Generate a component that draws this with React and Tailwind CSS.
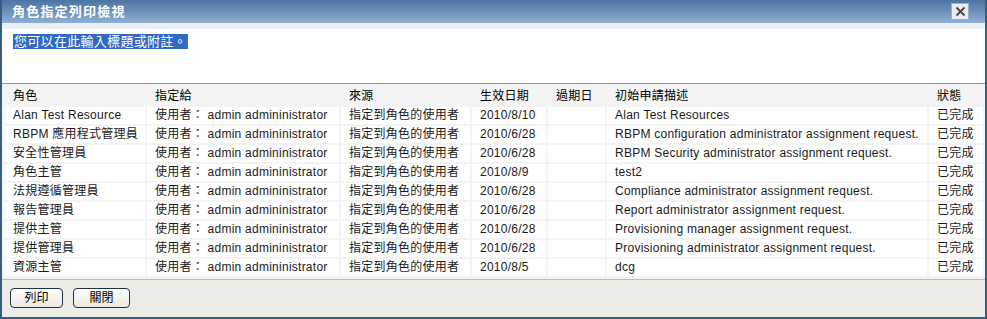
import React from 'react';

const rows = [
  ['Alan Test Resource', '2010/8/10', 'Alan Test Resources'],
  ['RBPM 應用程式管理員', '2010/6/28', 'RBPM configuration administrator assignment request.'],
  ['安全性管理員', '2010/6/28', 'RBPM Security administrator assignment request.'],
  ['角色主管', '2010/8/9', 'test2'],
  ['法規遵循管理員', '2010/6/28', 'Compliance administrator assignment request.'],
  ['報告管理員', '2010/6/28', 'Report administrator assignment request.'],
  ['提供主管', '2010/6/28', 'Provisioning manager assignment request.'],
  ['提供管理員', '2010/6/28', 'Provisioning administrator assignment request.'],
  ['資源主管', '2010/8/5', 'dcg'],
];

const headers = ['角色', '指定給', '來源', '生效日期', '過期日', '初始申請描述', '狀態'];

const font = { fontFamily: '"Liberation Sans", "Noto Sans CJK TC", sans-serif' };

const Cell = ({ children }) => (
  <div className="h-[17px] bg-white pl-[8px] text-[12px] leading-[17px] tracking-[0.25px] text-[#1a1a1a] whitespace-nowrap overflow-hidden">
    {children}
  </div>
);

const Button = ({ label, width }) => (
  <button
    className={`${width} h-[20px] rounded-[4px] border border-[#1c3350] bg-gradient-to-b from-white to-[#ebe8df] text-[12px] leading-[18px] text-black`}
  >
    {label}
  </button>
);

export default function App() {
  return (
    <div className="w-[987px] h-[319px] flex flex-col bg-[#ecebe6] border-x-2 border-b-2 border-[#3b5c81] overflow-hidden" style={font}>
      <div className="h-[23px] flex items-center justify-between bg-gradient-to-b from-[#4b74a2] to-[#8fb0d2] pl-[10px] pr-[16px]">
        <span className="text-[13px] font-bold text-white tracking-[1.2px]">角色指定列印檢視</span>
        <div className="w-[18px] h-[17px] flex items-center justify-center bg-[#e9edf1] border border-[#9fb0c2]">
          <svg width="11" height="11" viewBox="0 0 11 11">
            <path d="M1.5 1.5 L9.5 9.5 M9.5 1.5 L1.5 9.5" stroke="#4a4a4a" strokeWidth="2" />
          </svg>
        </div>
      </div>
      <div className="h-[6px] bg-[#e8eef4]" />
      <div className="h-[55px] bg-white border-b border-[#7f9db9] pl-[11px] pt-[4px] leading-[15px]">
        <span className="inline-block bg-[#316ac5] text-white text-[13px] leading-[15px] tracking-[0.3px] px-[1px]">您可以在此輸入標題或附註。</span>
      </div>
      <div className="flex-1 bg-[#f4f4f4] pl-[3px] pt-[4px] border-b border-[#bdbdbd]">
        <div className="grid grid-cols-[140px_192px_129px_74px_57px_320px_54px] gap-[2px]">
          {headers.map((h) => (
            <div key={h} className="h-[17px] pl-[8px] text-[12px] leading-[17px] tracking-[0.25px] text-black">{h}</div>
          ))}
          {rows.map((r, i) => (
            <React.Fragment key={i}>
              <Cell>{r[0]}</Cell>
              <Cell>使用者： admin admininistrator</Cell>
              <Cell>指定到角色的使用者</Cell>
              <Cell>{r[1]}</Cell>
              <Cell />
              <Cell>{r[2]}</Cell>
              <Cell>已完成</Cell>
            </React.Fragment>
          ))}
        </div>
      </div>
      <div className="h-[37px] flex items-center gap-[10px] pl-[8px] pb-[2px]">
        <Button label="列印" width="w-[53px]" />
        <Button label="關閉" width="w-[57px]" />
      </div>
    </div>
  );
}
